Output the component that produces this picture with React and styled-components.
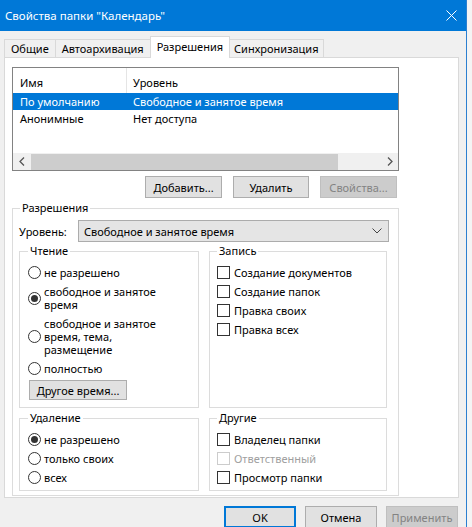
import React from 'react';
import styled, { createGlobalStyle } from 'styled-components';

const Global = createGlobalStyle`
  html, body { margin: 0; padding: 0; }
  body {
    font-family: "Noto Sans", "Open Sans", sans-serif;
    font-size: 11px;
    color: #000;
    background: #f3f3f3;
  }
  * { box-sizing: border-box; }
`;

const Screen = styled.div`
  width: 472px;
  height: 527px;
  display: flex;
  overflow: hidden;
  background: #f4f4f4;
`;

const Dialog = styled.div`
  width: 467px;
  height: 527px;
  display: flex;
  flex-direction: column;
  background: #f0f0f0;
  border-right: 1px solid #2b7fd0;
`;

const TitleBar = styled.div`
  height: 31px;
  flex: none;
  display: flex;
  align-items: center;
  justify-content: space-between;
  padding: 0 9px 0 5px;
  background: #0078d7;
  color: #fff;
  font-size: 11.5px;
`;

const TabRow = styled.div`
  display: flex;
  align-items: flex-end;
  margin-top: 5px;
  padding-left: 4px;
  height: 22px;
  position: relative;
  z-index: 1;
  margin-bottom: -1px;
`;

const Tab = styled.div`
  height: ${p => (p.$active ? '22px' : '19px')};
  padding: 0 ${p => p.$px || 6}px;
  margin-left: ${p => (p.$first ? '0' : '-1px')};
  border: 1px solid #d9d9d9;
  border-bottom: ${p => (p.$active ? 'none' : '1px solid #d9d9d9')};
  background: ${p => (p.$active ? '#fff' : '#f0f0f0')};
  display: flex;
  align-items: ${p => (p.$active ? 'flex-start' : 'center')};
  padding-top: ${p => (p.$active ? '2px' : '0')};
  white-space: nowrap;
  position: relative;
  z-index: ${p => (p.$active ? 2 : 1)};
`;

const Panel = styled.div`
  margin-left: 4px;
  width: 455px;
  height: 441px;
  flex: none;
  border: 1px solid #d9d9d9;
  background: #fff;
  padding: 9px 0 0 7px;
  overflow: hidden;
`;

const ListBox = styled.div`
  width: 387px;
  height: 104px;
  border: 1px solid #828282;
  display: flex;
  flex-direction: column;
`;

const ListRow = styled.div`
  display: flex;
  align-items: center;
  height: ${p => p.$h || 17}px;
  background: ${p => (p.$selected ? '#0078d7' : 'transparent')};
  color: ${p => (p.$selected ? '#fff' : '#000')};
  flex: none;
`;

const NameCell = styled.div`
  width: 114px;
  padding-left: 7px;
  height: 100%;
  display: flex;
  align-items: center;
  padding-top: ${p => (p.$head ? '3px' : '0')};
  border-right: 1px solid ${p => (p.$head ? '#e5e5e5' : 'transparent')};
`;

const LevelCell = styled.div`
  padding-left: 6px;
  display: flex;
  align-items: center;
  height: 100%;
  padding-top: ${p => (p.$head ? '3px' : '0')};
`;

const ListSpacer = styled.div`
  flex: 1;
`;

const HScroll = styled.div`
  height: 17px;
  flex: none;
  display: flex;
  align-items: center;
  background: #f0f0f0;
`;

const Arrow = styled.div`
  width: 17px;
  height: 17px;
  display: flex;
  align-items: center;
  justify-content: center;
  flex: none;
`;

const Thumb = styled.div`
  margin-left: 1px;
  width: 307px;
  height: 16px;
  background: #cdcdcd;
`;

const Track = styled.div`
  flex: 1;
`;

const ButtonRow = styled.div`
  width: ${p => p.$w}px;
  display: flex;
  justify-content: flex-end;
  gap: ${p => p.$gap}px;
  margin-top: ${p => p.$mt}px;
`;

const Button = styled.div`
  width: ${p => p.$w || 77}px;
  height: ${p => p.$h || 22}px;
  display: flex;
  align-items: center;
  justify-content: center;
  background: ${p => (p.$disabled ? '#cccccc' : '#e1e1e1')};
  border: ${p => (p.$focus ? '2px solid #0078d7' : `1px solid ${p.$disabled ? '#bfbfbf' : '#adadad'}`)};
  color: ${p => (p.$disabled ? '#838383' : '#000')};
  white-space: nowrap;
  flex: none;
`;

const SmallButton = styled(Button)`
  margin: 2px 0 0 1px;
`;

const Group = styled.fieldset`
  margin: ${p => p.$m || '0'};
  padding: ${p => p.$pad || '0 8px 6px 7px'};
  border: 1px solid #dcdcdc;
  min-width: 0;
  width: ${p => (p.$w ? `${p.$w}px` : 'auto')};
  display: flex;
  flex-direction: column;
`;

const Legend = styled.legend`
  padding: 0 2px;
  line-height: 16px;
  margin-left: ${p => p.$ml || 0}px;
`;

const LevelRow = styled.div`
  display: flex;
  align-items: center;
  justify-content: space-between;
  margin-top: 4px;
`;

const Combo = styled.div`
  width: 311px;
  height: 22px;
  background: #e5e5e5;
  border: 1px solid #acacac;
  display: flex;
  align-items: center;
  justify-content: space-between;
  padding: 0 6px 0 5px;
`;

const Columns = styled.div`
  display: grid;
  grid-template-columns: 180px 178px;
  column-gap: 10px;
  margin-top: ${p => p.$mt}px;
`;

const Option = styled.div`
  display: flex;
  align-items: center;
  min-height: 19px;
  padding: ${p => (p.$multi ? '3px 0' : '0')};
  line-height: 13px;
  color: ${p => (p.$disabled ? '#a0a0a0' : '#000')};
`;

const Radio = styled.span`
  width: 13px;
  height: 13px;
  border-radius: 50%;
  border: 1px solid #333;
  background: #fff;
  flex: none;
  margin-right: 3px;
  display: flex;
  align-items: center;
  justify-content: center;
  &::after {
    content: '';
    width: 7px;
    height: 7px;
    border-radius: 50%;
    background: ${p => (p.$checked ? '#333' : 'transparent')};
  }
`;

const Check = styled.span`
  width: 13px;
  height: 13px;
  border: 1px solid ${p => (p.$disabled ? '#cccccc' : '#333')};
  background: #fff;
  flex: none;
  margin-right: 4px;
`;

const Footer = styled.div`
  display: flex;
  justify-content: flex-end;
  gap: 9px;
  padding-right: 8px;
  margin-top: 8px;
`;

const Chevron = () => (
  <svg width="10" height="6" viewBox="0 0 10 6">
    <path d="M0.5 0.5 L5 5 L9.5 0.5" fill="none" stroke="#444" strokeWidth="1" />
  </svg>
);

const ArrowIcon = ({ dir }) => (
  <svg width="6" height="9" viewBox="0 0 6 9">
    <path d={dir === 'left' ? 'M5 0.5 L1 4.5 L5 8.5' : 'M1 0.5 L5 4.5 L1 8.5'} fill="none" stroke="#555" strokeWidth="1.3" />
  </svg>
);

const CloseIcon = () => (
  <svg width="11" height="11" viewBox="0 0 11 11">
    <path d="M0.5 0.5 L10.5 10.5 M10.5 0.5 L0.5 10.5" stroke="#fff" strokeWidth="1" />
  </svg>
);

const rows = [
  { name: 'По умолчанию', level: 'Свободное и занятое время', selected: true },
  { name: 'Анонимные', level: 'Нет доступа' },
];

export default function App() {
  return (
    <Screen>
      <Global />
      <Dialog>
        <TitleBar>
          <span>Свойства папки "Календарь"</span>
          <CloseIcon />
        </TitleBar>
        <TabRow>
          <Tab $first>Общие</Tab>
          <Tab>Автоархивация</Tab>
          <Tab $active>Разрешения</Tab>
          <Tab $px={4}>Синхронизация</Tab>
        </TabRow>
        <Panel>
          <ListBox>
            <ListRow $h={25}>
              <NameCell $head>Имя</NameCell>
              <LevelCell $head>Уровень</LevelCell>
            </ListRow>
            {rows.map(r => (
              <ListRow key={r.name} $selected={r.selected}>
                <NameCell>{r.name}</NameCell>
                <LevelCell>{r.level}</LevelCell>
              </ListRow>
            ))}
            <ListSpacer />
            <HScroll>
              <Arrow><ArrowIcon dir="left" /></Arrow>
              <Thumb />
              <Track />
              <Arrow><ArrowIcon dir="right" /></Arrow>
            </HScroll>
          </ListBox>
          <ButtonRow $w={385} $gap={11} $mt={5}>
            <Button>Добавить...</Button>
            <Button $w={76}>Удалить</Button>
            <Button $disabled>Свойства...</Button>
          </ButtonRow>
          <Group $w={387} $m="2px 0 0 0" $pad="0 9px 4px 6px">
            <Legend $ml={1}>Разрешения</Legend>
            <LevelRow>
              <span>Уровень:</span>
              <Combo>
                <span>Свободное и занятое время</span>
                <Chevron />
              </Combo>
            </LevelRow>
            <Columns $mt={1}>
              <Group $pad="4px 8px 7px 8px">
                <Legend>Чтение</Legend>
                <Option><Radio />не разрешено</Option>
                <Option $multi><Radio $checked />свободное и занятое<br />время</Option>
                <Option $multi><Radio />свободное и занятое<br />время, тема,<br />размещение</Option>
                <Option><Radio />полностью</Option>
                <SmallButton $w={98} $h={20}>Другое время...</SmallButton>
              </Group>
              <Group $pad="4px 8px 7px 7px">
                <Legend>Запись</Legend>
                <Option><Check />Создание документов</Option>
                <Option><Check />Создание папок</Option>
                <Option><Check />Правка своих</Option>
                <Option><Check />Правка всех</Option>
              </Group>
            </Columns>
            <Columns $mt={2}>
              <Group $pad="4px 8px 3px 8px">
                <Legend>Удаление</Legend>
                <Option><Radio $checked />не разрешено</Option>
                <Option><Radio />только своих</Option>
                <Option><Radio />всех</Option>
              </Group>
              <Group $pad="4px 8px 3px 7px">
                <Legend>Другие</Legend>
                <Option><Check />Владелец папки</Option>
                <Option $disabled><Check $disabled />Ответственный</Option>
                <Option><Check />Просмотр папки</Option>
              </Group>
            </Columns>
          </Group>
        </Panel>
        <Footer>
          <Button $w={72} $focus>OK</Button>
          <Button $w={72}>Отмена</Button>
          <Button $w={72} $disabled>Применить</Button>
        </Footer>
      </Dialog>
    </Screen>
  );
}
